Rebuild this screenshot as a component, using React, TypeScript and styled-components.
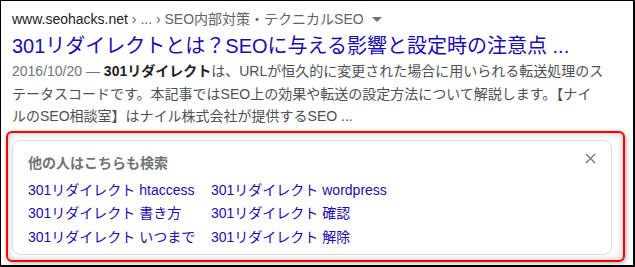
import styled, { createGlobalStyle } from 'styled-components';

const GlobalStyle = createGlobalStyle`
  body {
    margin: 0;
    background: #fff;
    font-family: 'Liberation Sans', 'Noto Sans CJK JP', sans-serif;
  }
`;

const related = [
  ['301リダイレクト htaccess', '301リダイレクト wordpress'],
  ['301リダイレクト 書き方', '301リダイレクト 確認'],
  ['301リダイレクト いつまで', '301リダイレクト 解除'],
];

const CloseIcon = () => (
  <svg width="11" height="11" viewBox="0 0 11 11">
    <path d="M1 1 L10 10 M10 1 L1 10" stroke="#70757a" strokeWidth="1.3" fill="none" />
  </svg>
);

const App = () => (
  <>
    <GlobalStyle />
    <Frame>
      <Result>
        <UrlLine>
          www.seohacks.net
          <Crumbs> › ... › SEO内部対策・テクニカルSEO</Crumbs>
          <Caret />
        </UrlLine>
        <Title>301リダイレクトとは？SEOに与える影響と設定時の注意点 ...</Title>
        <Snippet>
          <DateText>2016/10/20 — </DateText>
          <strong>301リダイレクト</strong>
          は、URLが恒久的に変更された場合に用いられる転送処理のステータスコードです。本記事ではSEO上の効果や転送の設定方法について解説します。【ナイ
          <br />
          ルのSEO相談室】はナイル株式会社が提供するSEO ...
        </Snippet>
      </Result>
      <Highlight>
        <Card>
          <CardHead>
            <Heading>他の人はこちらも検索</Heading>
            <CloseButton type="button" aria-label="閉じる">
              <CloseIcon />
            </CloseButton>
          </CardHead>
          <Links>
            {related.flat().map((text) => (
              <SearchLink key={text} href="#">
                {text}
              </SearchLink>
            ))}
          </Links>
        </Card>
      </Highlight>
    </Frame>
  </>
);

const Frame = styled.div`
  width: 635px;
  height: 267px;
  box-sizing: border-box;
  border: 1px solid #000;
  border-right-width: 2px;
  border-bottom-width: 2px;
  padding: 7px 0 0 5px;
  overflow: hidden;
`;

const Result = styled.div`
  width: 598px;
  padding-left: 6px;
`;

const UrlLine = styled.div`
  display: flex;
  align-items: center;
  font-size: 14px;
  line-height: 22px;
  color: #202124;
  white-space: pre;
`;

const Crumbs = styled.span`
  color: #5f6368;
`;

const Caret = styled.span`
  margin-left: 8px;
  width: 0;
  height: 0;
  border-left: 5px solid transparent;
  border-right: 5px solid transparent;
  border-top: 5px solid #70757a;
`;

const Title = styled.h3`
  margin: 3px 0 0;
  font-size: 20px;
  font-weight: normal;
  line-height: 26px;
  color: #1a0dab;
  white-space: nowrap;
`;

const Snippet = styled.div`
  margin-top: 1px;
  font-size: 14px;
  line-height: 22.5px;
  color: #4d5156;

  strong {
    color: #202124;
  }
`;

const DateText = styled.span`
  color: #70757a;
`;

const Highlight = styled.div`
  margin-top: 3px;
  width: 619px;
  box-sizing: border-box;
  border: 2px solid #f00;
  border-radius: 6px;
  padding: 7px 11px 5px 4px;
  box-shadow: 1px 1px 4px rgba(0, 0, 0, 0.35), inset 0 0 7px rgba(0, 0, 0, 0.25);
`;

const Card = styled.div`
  background: #fff;
  border: 1px solid #dadce0;
  border-radius: 8px;
  padding: 12px 15px 5px;
`;

const CardHead = styled.div`
  display: flex;
  justify-content: space-between;
  align-items: flex-start;
`;

const Heading = styled.div`
  font-size: 14px;
  font-weight: bold;
  line-height: 20px;
  color: #70757a;
`;

const CloseButton = styled.button`
  border: none;
  background: none;
  padding: 0;
  margin: 0;
  display: flex;
  line-height: 0;
`;

const Links = styled.div`
  margin-top: 6px;
  display: grid;
  grid-template-columns: 183px auto;
`;

const SearchLink = styled.a`
  font-size: 14px;
  line-height: 23.5px;
  color: #1a0dab;
  text-decoration: none;
  white-space: nowrap;
`;

export default App;
